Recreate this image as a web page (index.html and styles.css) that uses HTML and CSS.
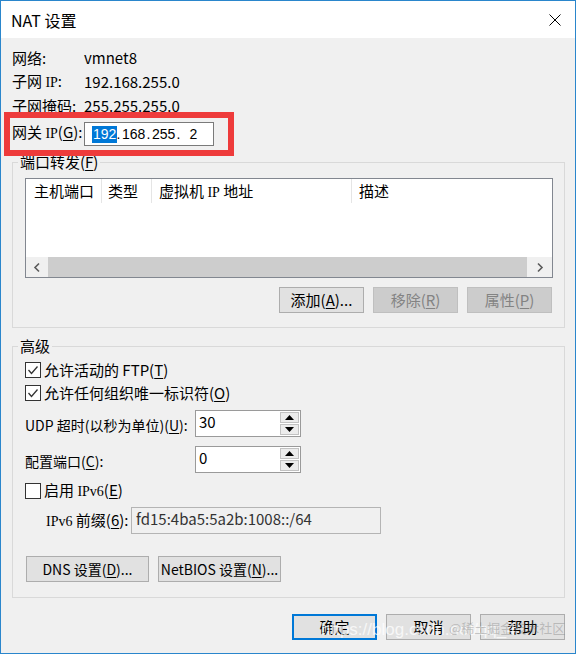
FILE: index.html
```html
<!DOCTYPE html>
<html lang="zh-CN">
<head>
<meta charset="utf-8">
<title>NAT 设置</title>
<link rel="stylesheet" href="styles.css">
</head>
<body>
<div class="window">
  <div class="titlebar">
    <span class="title">NAT 设置</span>
    <span class="close"><svg width="12" height="12" viewBox="0 0 12 12"><path d="M0.5 0.5L11.5 11.5M11.5 0.5L0.5 11.5" stroke="#000" stroke-width="1"/></svg></span>
  </div>
  <div class="content">
    <div class="info">
      <span class="lbl">网络:</span><span class="val">vmnet8</span>
      <span class="lbl">子网 <span class="ipf">IP</span>:</span><span class="val">192.168.255.0</span>
      <span class="lbl">子网掩码:</span><span class="val">255.255.255.0</span>
      <span class="lbl gw">网关 <span class="ipf">IP</span>(<u>G</u>):</span>
      <div class="ipbox gw">
        <span class="oct"><span class="sel">192</span></span><span class="dot">.</span><span class="oct">168</span><span class="dot">.</span><span class="oct">255</span><span class="dot">.</span><span class="oct">2</span>
      </div>
    </div>

    <fieldset class="group pf">
      <legend>端口转发(<u>F</u>)</legend>
      <div class="listview">
        <div class="lv-head">
          <span class="col c1">主机端口</span><span class="col c2">类型</span><span class="col c3">虚拟机 <span class="ipf">IP</span> 地址</span><span class="col c4">描述</span>
        </div>
        <div class="lv-body"></div>
        <div class="hscroll">
          <span class="sarrow left"><svg width="8" height="11" viewBox="0 0 8 11"><polyline points="6,1.5 2,5.5 6,9.5" fill="none" stroke="#5a5a5a" stroke-width="1.6"/></svg></span>
          <span class="thumb"></span>
          <span class="sarrow right"><svg width="8" height="11" viewBox="0 0 8 11"><polyline points="2,1.5 6,5.5 2,9.5" fill="none" stroke="#5a5a5a" stroke-width="1.6"/></svg></span>
        </div>
      </div>
      <div class="btnrow">
        <button class="btn">添加(<u>A</u>)...</button>
        <button class="btn" disabled>移除(<u>R</u>)</button>
        <button class="btn" disabled>属性(<u>P</u>)</button>
      </div>
    </fieldset>

    <fieldset class="group adv">
      <legend>高级</legend>
      <label class="chk"><span class="box"><svg width="14" height="14" viewBox="0 0 14 14"><polyline points="2.5,7 5.5,10.5 11.5,3.5" fill="none" stroke="#333" stroke-width="1.3"/></svg></span><span class="ctext">允许活动的 FTP(<u>T</u>)</span></label>
      <label class="chk c2row"><span class="box"><svg width="14" height="14" viewBox="0 0 14 14"><polyline points="2.5,7 5.5,10.5 11.5,3.5" fill="none" stroke="#333" stroke-width="1.3"/></svg></span><span class="ctext">允许任何组织唯一标识符(<u>O</u>)</span></label>

      <div class="frow">
        <span class="flbl">UDP 超时(以秒为单位)(<u>U</u>):</span>
        <div class="spinner">
          <span class="sval">30</span>
          <span class="spins">
            <span class="spin"><svg width="9" height="5" viewBox="0 0 9 5"><polygon points="4.5,0 9,5 0,5" fill="#000"/></svg></span>
            <span class="spin"><svg width="9" height="5" viewBox="0 0 9 5"><polygon points="0,0 9,0 4.5,5" fill="#000"/></svg></span>
          </span>
        </div>
      </div>
      <div class="frow">
        <span class="flbl">配置端口(<u>C</u>):</span>
        <div class="spinner">
          <span class="sval">0</span>
          <span class="spins">
            <span class="spin"><svg width="9" height="5" viewBox="0 0 9 5"><polygon points="4.5,0 9,5 0,5" fill="#000"/></svg></span>
            <span class="spin"><svg width="9" height="5" viewBox="0 0 9 5"><polygon points="0,0 9,0 4.5,5" fill="#000"/></svg></span>
          </span>
        </div>
      </div>

      <label class="chk c3row"><span class="box"></span><span class="ctext">启用 <span class="ipf">IPv6</span>(<u>E</u>)</span></label>

      <div class="v6row">
        <span class="v6lbl"><span class="ipf">IPv6</span> 前缀(<u>6</u>):</span>
        <div class="v6box">fd15:4ba5:5a2b:1008::/64</div>
      </div>

      <div class="advbtns">
        <button class="btn wide">DNS 设置(<u>D</u>)...</button>
        <button class="btn wide">NetBIOS 设置(<u>N</u>)...</button>
      </div>
    </fieldset>

    <div class="footer">
      <button class="btn default">确定</button>
      <button class="btn">取消</button>
      <button class="btn">帮助</button>
    </div>
  </div>

  <div class="annot"></div>
  <div class="watermark"><span class="wm1">https://blog.csdn.net/qq_4</span><span class="wm2">@稀土掘金技术社区</span></div>
</div>
</body>
</html>
```

FILE: styles.css
```css
* { box-sizing: border-box; }

html, body {
  margin: 0;
  padding: 0;
  background: #ffffff;
}

body {
  font-family: "Noto Sans CJK SC", "Microsoft YaHei", sans-serif;
  font-size: 15px;
  line-height: 18px;
  color: #000;
}

u { text-decoration: underline; text-underline-offset: 2px; }

.window {
  position: relative;
  width: 576px;
  height: 654px;
  border: 1px solid #2a86cc;
  background: #f0f0f0;
  overflow: hidden;
  display: flex;
  flex-direction: column;
}

.titlebar {
  height: 37px;
  background: #ffffff;
  display: flex;
  align-items: center;
  justify-content: space-between;
  padding: 0 14px 0 10px;
  flex: none;
}

.title {
  font-size: 16px;
  line-height: 20px;
  padding-top: 1px;
}

.close {
  display: flex;
  width: 12px;
  height: 12px;
  margin-top: 1px;
}

.content {
  flex: 1;
  padding-top: 8px;
}

.ipf {
  font-family: "Liberation Serif", "DejaVu Serif", serif;
  font-size: 14px;
}

/* info grid */
.info {
  display: grid;
  grid-template-columns: 72px auto;
  grid-template-rows: 24px 24px 24px 28px;
  align-items: center;
  padding-left: 11px;
}

.lbl, .val { white-space: nowrap; }

.info .gw { align-self: end; }
.lbl.gw { line-height: 24px; }

.ipbox {
  width: 130px;
  height: 24px;
  background: #fff;
  border: 1px solid #7a7a7a;
  display: flex;
  align-items: center;
  padding-left: 7px;
  font-family: "Liberation Sans", Arial, sans-serif;
  font-size: 14px;
  line-height: 17px;
}

.oct {
  width: 23px;
  text-align: center;
}

.dot {
  width: 7px;
  text-align: center;
}

.sel {
  display: inline-block;
  background: #0078d7;
  color: #fff;
  padding: 0 1px;
  line-height: 17px;
}

/* group boxes */
.group {
  margin: 7px 10px 0 11px;
  border: 1px solid #d9d9d9;
  min-width: 0;
}

.group legend {
  padding: 0 2px;
  margin-left: -7px;
  line-height: 18px;
}

.pf {
  padding: 7px 11px 14px 12px;
}

.listview {
  height: 100px;
  border: 1px solid #828790;
  background: #fff;
  display: flex;
  flex-direction: column;
}

.lv-head {
  display: flex;
  height: 24px;
  flex: none;
}

.col {
  line-height: 24px;
  white-space: nowrap;
}

.c1 { width: 75px; padding-left: 8px; }
.c2 { width: 50px; padding-left: 6px; border-left: 1px solid #e5e5e5; }
.c3 { width: 200px; padding-left: 7px; border-left: 1px solid #e5e5e5; }
.c4 { flex: 1; padding-left: 7px; border-left: 1px solid #e5e5e5; }

.lv-body { flex: 1; }

.hscroll {
  height: 20px;
  flex: none;
  display: flex;
  background: #f0f0f0;
}

.sarrow {
  display: flex;
  align-items: center;
  justify-content: center;
  flex: none;
}

.sarrow.left { width: 22px; }
.sarrow.right { width: 25px; }

.thumb {
  flex: 1;
  background: #cdcdcd;
}

.btnrow {
  display: flex;
  justify-content: flex-end;
  gap: 9px;
  margin-top: 9px;
  margin-right: 1px;
}

.btn {
  width: 85px;
  height: 26px;
  padding: 0;
  background: #e1e1e1;
  border: 1px solid #adadad;
  font-family: inherit;
  font-size: 15px;
  line-height: 18px;
  color: #000;
  white-space: nowrap;
}

.btn:disabled {
  background: #cccccc;
  border-color: #bfbfbf;
  color: #838383;
}

.btn.default {
  border: 2px solid #0078d7;
}

/* advanced */
.adv {
  margin-top: 9px;
  padding: 7px 11px 15px 12px;
}

.chk {
  display: flex;
  align-items: center;
  height: 16px;
  gap: 3px;
}

.ctext { white-space: nowrap; }

.box {
  width: 16px;
  height: 16px;
  border: 1px solid #333;
  background: #fff;
  display: flex;
  align-items: center;
  justify-content: center;
  flex: none;
}

.c2row { margin-top: 7px; }
.c3row { margin-top: 10px; }

.frow {
  display: flex;
  align-items: center;
  height: 27px;
  margin-top: 9px;
}

.flbl {
  width: 170px;
  flex: none;
  padding-top: 2px;
  white-space: nowrap;
  font-size: 14px;
}

.spinner {
  width: 106px;
  height: 27px;
  border: 1px solid #9a9a9a;
  background: #fff;
  display: flex;
}

.sval {
  flex: 1;
  padding: 2px 0 0 3px;
  line-height: 18px;
}

.spins {
  width: 20px;
  display: flex;
  flex-direction: column;
  gap: 1px;
  padding: 1px 1px 1px 0;
}

.spin {
  flex: 1;
  background: #ececec;
  border: 1px solid #c2c2c2;
  display: flex;
  align-items: center;
  justify-content: center;
}

.v6row {
  display: flex;
  align-items: center;
  margin-top: 8px;
  padding-left: 21px;
}

.v6lbl {
  width: 85px;
  flex: none;
  white-space: nowrap;
}

.v6box {
  width: 250px;
  height: 27px;
  border: 1px solid #b4b4b4;
  background: #f0f0f0;
  color: #333;
  padding: 1px 0 0 4px;
  line-height: 20px;
}

.advbtns {
  display: flex;
  gap: 9px;
  margin-top: 22px;
  margin-left: 1px;
}

.btn.wide {
  width: 123px;
  font-size: 14px;
}

.footer {
  display: flex;
  justify-content: flex-end;
  gap: 9px;
  margin-top: 16px;
  padding-right: 10px;
}

/* annotation & watermark overlays */
.annot {
  position: absolute;
  left: 3px;
  top: 111px;
  width: 230px;
  height: 44px;
  border: 6px solid #ee3b3b;
}

.watermark {
  position: absolute;
  left: 320px;
  top: 619px;
  pointer-events: none;
  white-space: nowrap;
}

.wm1 {
  font-family: "Liberation Sans", Arial, sans-serif;
  font-size: 17px;
  color: rgba(255, 255, 255, 0.75);
}

.wm2 {
  position: absolute;
  left: 128px;
  top: -1px;
  font-size: 13px;
  color: rgba(110, 110, 110, 0.35);
}
```
